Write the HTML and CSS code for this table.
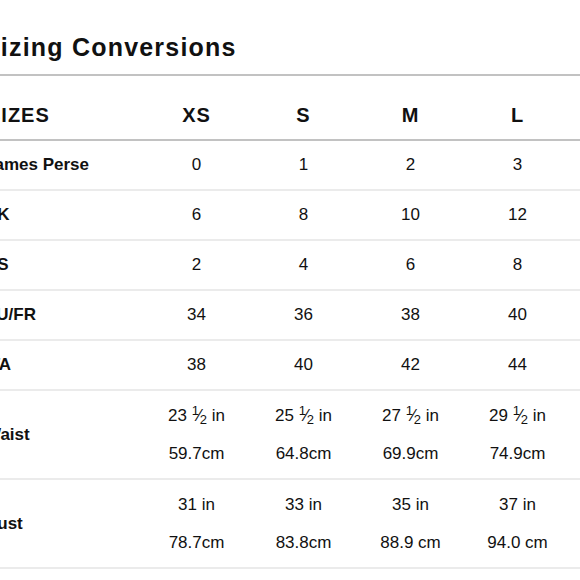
FILE: index.html
```html
<!DOCTYPE html>
<html>
<head>
<meta charset="utf-8">
<link rel="stylesheet" href="styles.css">
</head>
<body>
<div class="sheet">
  <h1 class="title">Sizing Conversions</h1>
  <div class="row head">
    <div class="label">SIZES</div>
    <div class="cell">XS</div>
    <div class="cell">S</div>
    <div class="cell">M</div>
    <div class="cell">L</div>
    <div class="cell"></div>
  </div>
  <div class="row">
    <div class="label">James Perse</div>
    <div class="cell">0</div><div class="cell">1</div><div class="cell">2</div><div class="cell">3</div><div class="cell"></div>
  </div>
  <div class="row">
    <div class="label">UK</div>
    <div class="cell">6</div><div class="cell">8</div><div class="cell">10</div><div class="cell">12</div><div class="cell"></div>
  </div>
  <div class="row">
    <div class="label">US</div>
    <div class="cell">2</div><div class="cell">4</div><div class="cell">6</div><div class="cell">8</div><div class="cell"></div>
  </div>
  <div class="row">
    <div class="label">EU/FR</div>
    <div class="cell">34</div><div class="cell">36</div><div class="cell">38</div><div class="cell">40</div><div class="cell"></div>
  </div>
  <div class="row">
    <div class="label">ITA</div>
    <div class="cell">38</div><div class="cell">40</div><div class="cell">42</div><div class="cell">44</div><div class="cell"></div>
  </div>
  <div class="row tall">
    <div class="label">Waist</div>
    <div class="cell two"><span>23 <sup class="num">1</sup><span class="slash">⁄</span><sub class="den">2</sub> in</span><span>59.7cm</span></div>
    <div class="cell two"><span>25 <sup class="num">1</sup><span class="slash">⁄</span><sub class="den">2</sub> in</span><span>64.8cm</span></div>
    <div class="cell two"><span>27 <sup class="num">1</sup><span class="slash">⁄</span><sub class="den">2</sub> in</span><span>69.9cm</span></div>
    <div class="cell two"><span>29 <sup class="num">1</sup><span class="slash">⁄</span><sub class="den">2</sub> in</span><span>74.9cm</span></div>
    <div class="cell"></div>
  </div>
  <div class="row tall">
    <div class="label">Bust</div>
    <div class="cell two"><span>31 in</span><span>78.7cm</span></div>
    <div class="cell two"><span>33 in</span><span>83.8cm</span></div>
    <div class="cell two"><span>35 in</span><span>88.9 cm</span></div>
    <div class="cell two"><span>37 in</span><span>94.0 cm</span></div>
    <div class="cell"></div>
  </div>
</div>
</body>
</html>
```
FILE: styles.css
```css
html, body {
  margin: 0;
  padding: 0;
  overflow: hidden;
  background: #ffffff;
}
body {
  font-family: "Liberation Sans", Arial, sans-serif;
  color: #111111;
}
.sheet {
  margin-left: -13px;
  width: 660px;
}
.title {
  margin: 0 0 0 -4px;
  padding: 34px 0 14px 0;
  font-size: 25px;
  line-height: 26px;
  font-weight: bold;
  letter-spacing: 1.2px;
  border-bottom: 2px solid #c2c2c2;
}
.row {
  display: grid;
  grid-template-columns: 156px repeat(4, 107px) 1fr;
  height: 48px;
  align-items: center;
  border-bottom: 2px solid #ebebeb;
  font-size: 17px;
}
.row.head {
  height: 63px;
  align-items: start;
  border-bottom: 2px solid #c2c2c2;
  font-size: 20px;
  line-height: 20px;
  font-weight: bold;
  letter-spacing: 1px;
}
.row.head .label,
.row.head .cell {
  padding-top: 29px;
}
.row.tall {
  height: 87px;
}
.label {
  font-weight: bold;
  white-space: nowrap;
  margin-left: -2px;
}
.row.head .label {
  margin-left: 0;
}
.cell {
  text-align: center;
  white-space: nowrap;
}
.cell.two {
  display: flex;
  flex-direction: column;
  align-items: center;
  line-height: 38px;
}
.num, .den {
  font-size: 13px;
  line-height: 0;
  position: relative;
  vertical-align: baseline;
}
.num {
  top: -6px;
}
.den {
  top: 3px;
}
.slash {
  font-size: 17px;
  margin: 0 -1px;
}
```
